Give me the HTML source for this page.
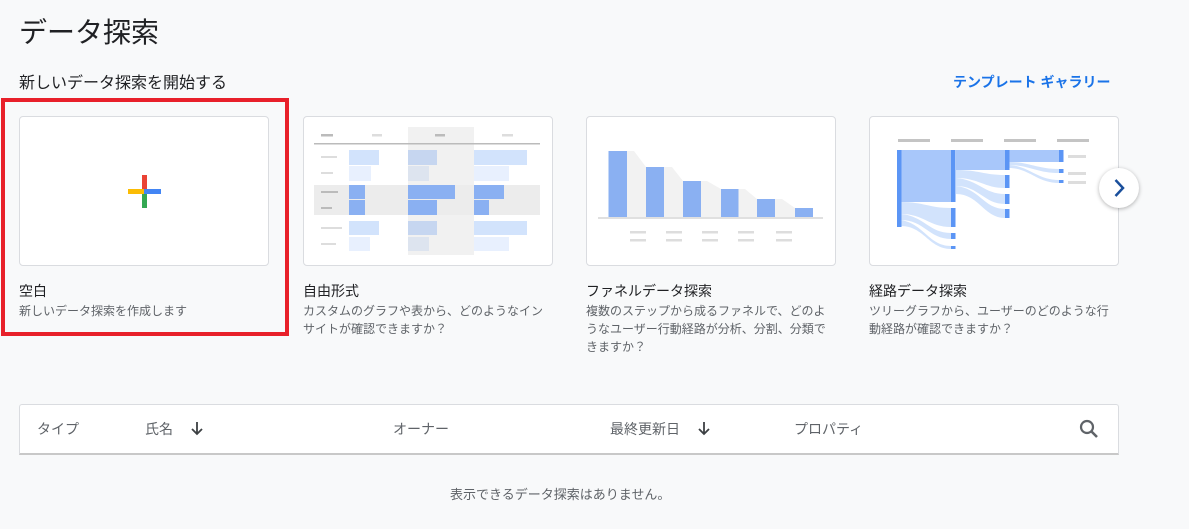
<!DOCTYPE html>
<html><head><meta charset="utf-8"><style>
*{margin:0;padding:0;box-sizing:border-box}
body{width:1189px;height:529px;background:#f8f9fa;font-family:"Liberation Sans","Noto Sans CJK JP",sans-serif;color:#202124;position:relative;overflow:hidden}
.a{position:absolute;white-space:nowrap}
.card{position:absolute;top:116px;width:250px;height:150px;background:#fff;border:1px solid #dadce0;border-radius:4px;overflow:hidden}
.t{font-size:14px;color:#202124}
.d{font-size:12px;color:#5f6368;line-height:18px}
.h{font-size:14px;color:#5f6368;top:419px}
</style></head><body>
<div class="a" style="left:19px;top:15px;font-size:28px;line-height:36px">データ探索</div>
<div class="a" style="left:19px;top:73px;font-size:16px;line-height:22px">新しいデータ探索を開始する</div>
<div class="a" style="left:953px;top:73px;font-size:14px;color:#1a73e8;font-weight:bold;line-height:18px">テンプレート ギャラリー</div>
<div class="a" style="left:1px;top:98px;width:288px;height:238px;border:4px solid #e8202a"></div>

<div class="card" style="left:19px">
<svg width="250" height="150" style="position:absolute;left:0;top:0">
<rect x="122" y="58" width="5" height="16" fill="#ea4335"/>
<rect x="122" y="74" width="5" height="17" fill="#34a853"/>
<rect x="108" y="72" width="17" height="5" fill="#fbbc04"/>
<rect x="124" y="72" width="17" height="5" fill="#4285f4"/>
</svg></div>

<div class="card" style="left:303px">
<svg width="250" height="150" style="position:absolute;left:-1px;top:-1px">
<rect x="105" y="11" width="66" height="128" fill="#f1f1f1"/>
<rect x="11" y="69" width="226" height="30" fill="#ececec"/>
<rect x="18" y="18" width="12" height="2.5" fill="#bbb"/><rect x="69" y="18" width="10" height="2.5" fill="#ddd"/><rect x="132" y="18" width="10" height="2.5" fill="#bbb"/><rect x="199" y="18" width="11" height="2.5" fill="#ddd"/>
<rect x="11" y="27" width="226" height="1.5" fill="#bbb"/>
<g fill="#ddd"><rect x="18" y="40" width="16" height="2"/><rect x="18" y="56" width="12" height="2"/><rect x="18" y="111" width="21" height="2"/><rect x="18" y="127" width="15" height="2"/></g>
<g fill="#bbb"><rect x="18" y="75" width="17" height="2"/><rect x="18" y="91" width="11" height="2"/></g>
<g fill="#d2e3fc"><rect x="46" y="34" width="30" height="15"/><rect x="171" y="34" width="53" height="15"/><rect x="46" y="105" width="30" height="14"/><rect x="171" y="105" width="53" height="14"/></g>
<g fill="#c6d6f0"><rect x="105" y="34" width="29" height="15"/><rect x="105" y="105" width="29" height="14"/></g>
<g fill="#e8f0fe"><rect x="46" y="50" width="22" height="15"/><rect x="171" y="50" width="35" height="15"/><rect x="46" y="121" width="21" height="14"/><rect x="171" y="121" width="35" height="14"/></g>
<g fill="#dde4ef"><rect x="105" y="50" width="21" height="15"/><rect x="105" y="121" width="21" height="14"/></g>
<g fill="#8ab0f2"><rect x="46" y="69" width="16" height="14"/><rect x="105" y="69" width="47" height="14"/><rect x="171" y="69" width="30" height="14"/><rect x="46" y="84" width="16" height="15"/><rect x="105" y="84" width="29" height="15"/><rect x="171" y="84" width="15" height="15"/></g>
</svg></div>

<div class="card" style="left:586px">
<svg width="250" height="150" style="position:absolute;left:-1px;top:-1px">
<polygon points="41,35 48,35 60,51 86,51 97,65 121,65 135,73 159,73 171,83 196,83 209,92 209,101 41,101" fill="#f2f2f2"/>
<g fill="#8ab0f2"><rect x="22.5" y="35" width="18.5" height="66"/><rect x="60" y="51" width="18" height="50"/><rect x="97" y="65" width="18" height="36"/><rect x="135" y="73" width="17.5" height="28"/><rect x="171" y="83" width="18" height="18"/><rect x="209" y="92" width="18" height="9"/></g>
<rect x="12" y="101" width="225" height="2" fill="#e0e0e0"/>
<g fill="#ddd"><rect x="44" y="115" width="16" height="2.5"/><rect x="80" y="115" width="16" height="2.5"/><rect x="116" y="115" width="16" height="2.5"/><rect x="152" y="115" width="16" height="2.5"/><rect x="190" y="115" width="16" height="2.5"/>
<rect x="44" y="123" width="16" height="2.5"/><rect x="80" y="123" width="16" height="2.5"/><rect x="116" y="123" width="16" height="2.5"/><rect x="152" y="123" width="16" height="2.5"/><rect x="190" y="123" width="16" height="2.5"/></g>
</svg></div>

<div class="card" style="left:869px">
<svg width="250" height="150" style="position:absolute;left:-1px;top:-1px">
<g fill="#c4c4c4"><rect x="29" y="23" width="32" height="3"/><rect x="82" y="23" width="32" height="3"/><rect x="135" y="23" width="32" height="3"/><rect x="188" y="23" width="32" height="3"/></g>
<g fill="#d2e3fc">
<path d="M32 86 C55 86 60 92 82 92 L82 111 C60 111 55 98 32 98Z"/>
<path d="M32 98 C55 100 60 117 82 117 L82 123 C60 123 55 104 32 104Z"/>
<path d="M32 104 C55 108 60 130 82 130 L82 133 C60 133 55 110 32 110Z"/>
<path d="M87 54 C110 54 115 59 136 59 L136 72 C115 72 110 62 87 62Z"/>
<path d="M87 62 C110 64 115 78 136 78 L136 88 C115 88 110 70 87 70Z"/>
<path d="M87 70 C110 72 115 93 136 93 L136 102 C115 102 110 78 87 78Z"/>
<path d="M140 46 C160 46 168 53 190 53 L190 57 C168 57 160 49 140 49Z"/>
<path d="M140 49 C160 50 168 64 190 64 L190 67 C168 67 160 52 140 52Z"/>
</g>
<rect x="32" y="34" width="50" height="52" fill="#a8c7fa"/>
<rect x="87" y="34" width="49" height="20" fill="#a8c7fa"/>
<rect x="140" y="34" width="50" height="12" fill="#a8c7fa"/>
<g fill="#5b95f5"><rect x="28" y="34" width="4.5" height="77"/>
<rect x="82" y="34" width="4.5" height="52"/><rect x="82" y="92" width="4.5" height="19"/><rect x="82" y="117" width="4.5" height="6"/><rect x="82" y="130" width="4.5" height="3"/>
<rect x="136" y="34" width="4.5" height="20"/><rect x="136" y="59" width="4.5" height="13"/><rect x="136" y="78" width="4.5" height="10"/><rect x="136" y="93" width="4.5" height="9"/>
<rect x="190" y="34" width="4.5" height="12"/><rect x="190" y="53" width="4.5" height="4"/><rect x="190" y="64" width="4.5" height="3"/></g>
<g fill="#ddd"><rect x="199" y="39" width="18" height="3"/><rect x="199" y="56" width="18" height="3"/><rect x="199" y="65" width="18" height="3"/></g>
</svg></div>

<div class="a" style="left:1099px;top:168px;width:40px;height:40px;border-radius:50%;background:#fff;box-shadow:0 1px 4px rgba(0,0,0,.3)">
<svg width="40" height="40"><path d="M16.5 12 L24 20 L16.5 28" fill="none" stroke="#1a4f9c" stroke-width="2.5"/></svg></div>

<div class="a t" style="left:19px;top:281px">空白</div>
<div class="a d" style="left:19px;top:302px">新しいデータ探索を作成します</div>
<div class="a t" style="left:303px;top:281px">自由形式</div>
<div class="a d" style="left:303px;top:302px">カスタムのグラフや表から、どのようなイン<br>サイトが確認できますか？</div>
<div class="a t" style="left:586px;top:281px">ファネルデータ探索</div>
<div class="a d" style="left:586px;top:302px">複数のステップから成るファネルで、どのよ<br>うなユーザー行動経路が分析、分割、分類で<br>きますか？</div>
<div class="a t" style="left:869px;top:281px">経路データ探索</div>
<div class="a d" style="left:869px;top:302px">ツリーグラフから、ユーザーのどのような行<br>動経路が確認できますか？</div>

<div class="a" style="left:19px;top:404px;width:1100px;height:51px;background:#fff;border:1px solid #dadce0;border-bottom:2px solid #c8c8c8;border-radius:3px 3px 0 0"></div>
<div class="a h" style="left:37px">タイプ</div>
<div class="a h" style="left:145px">氏名</div>
<div class="a h" style="left:190px;color:#3c4043">
<svg width="14" height="18"><path d="M7 3 V15 M2 10 L7 15 L12 10" fill="none" stroke="#3c4043" stroke-width="1.8"/></svg></div>
<div class="a h" style="left:393px">オーナー</div>
<div class="a h" style="left:610px">最終更新日</div>
<div class="a h" style="left:697px"><svg width="14" height="18"><path d="M7 3 V15 M2 10 L7 15 L12 10" fill="none" stroke="#3c4043" stroke-width="1.8"/></svg></div>
<div class="a h" style="left:794px">プロパティ</div>
<svg class="a" style="left:1078px;top:418px" width="22" height="22"><circle cx="9" cy="9" r="6" fill="none" stroke="#5f6368" stroke-width="2.2"/><path d="M13.5 13.5 L19 19" stroke="#5f6368" stroke-width="2.6"/></svg>
<div class="a" style="left:450px;top:484px;font-size:13px;color:#5f6368">表示できるデータ探索はありません。</div>
</body></html>
